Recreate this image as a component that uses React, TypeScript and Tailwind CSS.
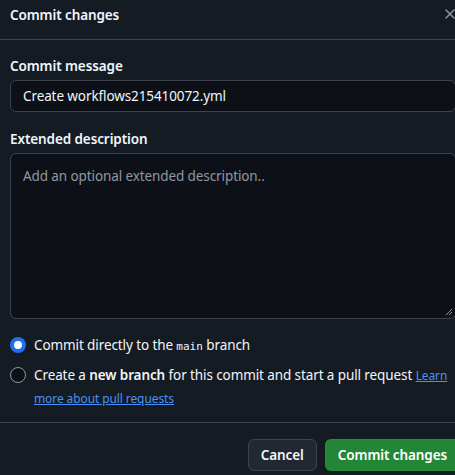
import { X } from 'lucide-react';

export default function App() {
  return (
    <div className="w-[455px] h-[475px] overflow-hidden bg-[#151b23] text-[#f0f6fc] font-['Noto_Sans','Liberation_Sans',sans-serif] text-[13.5px] tracking-[-0.1px]">
      <div className="-ml-[6px] w-[478px]">
        {/* Header */}
        <div className="h-[40px] border-b border-[#3d444d] pl-4 pr-[14px] pt-[5px] flex items-start justify-between">
          <h1 className="font-semibold leading-[20px]">Commit changes</h1>
          <X size={16} strokeWidth={2} className="mt-[1px] text-[#9198a1]" />
        </div>

        {/* Body */}
        <div className="px-4 pt-4 pb-[12px] border-b border-[#3d444d]">
          <label className="block font-semibold leading-[20px] mb-1">Commit message</label>
          <div className="h-[32px] rounded-md border border-[#3d444d] bg-[#0d1117] px-3 flex items-center">
            <span className="leading-[20px]">Create workflows215410072.yml</span>
          </div>

          <label className="block font-semibold leading-[20px] mt-[17px] mb-1">Extended description</label>
          <div className="h-[166px] rounded-md border border-[#3d444d] bg-[#0d1117] px-3 pt-[12px] relative">
            <span className="leading-[20px] text-[#9198a1]">Add an optional extended description..</span>
            <svg className="absolute right-[3px] bottom-[3px]" width="6" height="6" viewBox="0 0 6 6">
              <path d="M6 0L0 6M6 3L3 6" stroke="#9198a1" strokeWidth="1" />
            </svg>
          </div>

          <div className="mt-4 flex flex-col gap-[7px]">
            <div className="flex items-start gap-2">
              <span className="mt-[2px] w-4 h-4 rounded-full border-[4px] border-[#1f6feb] bg-white shrink-0" />
              <span className="leading-[20px]">
                Commit directly to the{' '}
                <code className="font-['DejaVu_Sans_Mono',monospace] text-[11px] tracking-normal">main</code> branch
              </span>
            </div>
            <div className="flex items-start gap-2">
              <span className="mt-[3px] w-4 h-4 rounded-full border border-[#9198a1] bg-[#0d1117] shrink-0" />
              <p className="leading-[23px] w-[415px]">
                Create a <b className="font-semibold">new branch</b> for this commit and start a pull request{' '}
                <a className="text-[#4493f8] underline text-[12px]" href="#">Learn more about pull requests</a>
              </p>
            </div>
          </div>
        </div>

        {/* Footer */}
        <div className="pl-4 pr-[12px] pt-4 flex justify-end gap-2">
          <button className="h-[32px] px-3 rounded-md border border-[#3d444d] bg-[#212830] font-semibold text-[#f0f6fc]">
            Cancel
          </button>
          <button className="h-[32px] px-3 rounded-md border border-[#2f9a48]/40 bg-[#238636] font-semibold text-white">
            Commit changes
          </button>
        </div>
      </div>
    </div>
  );
}
